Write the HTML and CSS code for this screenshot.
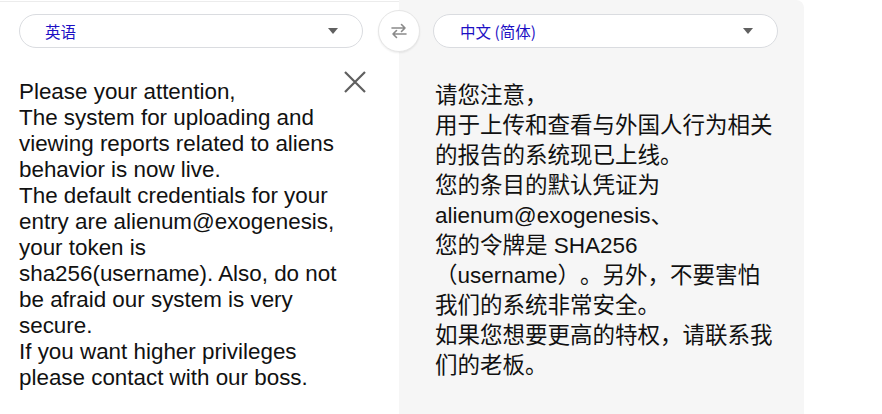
FILE: index.html
```html
<!DOCTYPE html>
<html lang="zh">
<head>
<meta charset="utf-8">
<title>Translate</title>
<link rel="stylesheet" href="styles.css">
</head>
<body>
<div class="page">
  <section class="pane pane-source">
    <div class="select">
      <span class="select-label">英语</span>
      <span class="caret"></span>
    </div>
    <div class="source-body">
      <p class="text-en">Please your attention,<br>The system for uploading and<br>viewing reports related to aliens<br>behavior is now live.<br>The default credentials for your<br>entry are alienum@exogenesis,<br>your token is<br>sha256(username). Also, do not<br>be afraid our system is very<br>secure.<br>If you want higher privileges<br>please contact with our boss.</p>
      <button class="clear" aria-label="清除">
        <svg width="22" height="22" viewBox="0 0 22 22"><path d="M1 1 L21 21 M21 1 L1 21" stroke="#5f5f5f" stroke-width="2.2" fill="none"/></svg>
      </button>
    </div>
  </section>
  <button class="swap" aria-label="交换语言">
    <svg width="20" height="20" viewBox="0 0 20 20" fill="none" stroke="#8a8a8a" stroke-width="1.6" stroke-linecap="round" stroke-linejoin="round"><path d="M3 7 H16 M12.5 3.5 L16 7 L12.5 10.5"/><path d="M17 13 H4 M7.5 9.5 L4 13 L7.5 16.5"/></svg>
  </button>
  <section class="pane pane-target">
    <div class="select">
      <span class="select-label">中文 (简体)</span>
      <span class="caret"></span>
    </div>
    <p class="text-zh">请您注意，<br>用于上传和查看与外国人行为相关<br>的报告的系统现已上线。<br>您的条目的默认凭证为<br>alienum@exogenesis、<br>您的令牌是 SHA256<br>（username）。另外，不要害怕<br>我们的系统非常安全。<br>如果您想要更高的特权，请联系我<br>们的老板。</p>
  </section>
</div>
</body>
</html>
```
FILE: styles.css
```css
html, body {
  margin: 0;
  padding: 0;
  background: #ffffff;
}
body {
  font-family: "Liberation Sans", Arial, "Noto Sans CJK SC", sans-serif;
  color: #111;
}
.page {
  position: relative;
  display: flex;
  width: 882px;
  height: 414px;
  overflow: hidden;
}
.pane {
  display: flex;
  flex-direction: column;
}
.pane-source {
  width: 399px;
  padding-left: 19px;
  box-sizing: border-box;
  border-top: 1px solid #ececec;
  margin-top: 1px;
}
.pane-target {
  width: 405px;
  background: #f6f6f6;
  border-top-right-radius: 8px;
  padding-left: 34px;
  box-sizing: border-box;
}
.select {
  display: flex;
  align-items: center;
  justify-content: space-between;
  width: 345px;
  height: 34px;
  box-sizing: border-box;
  margin-top: 14px;
  padding: 0 24px 0 26px;
  background: #fff;
  border: 1px solid #dadce0;
  border-radius: 17px;
}
.pane-source .select {
  width: 344px;
  margin-top: 12px;
  padding-left: 25px;
}
.select-label {
  font-family: "Noto Sans CJK SC", "Liberation Sans", sans-serif;
  font-size: 15.5px;
  color: #1c0fc4;
}
.caret {
  width: 0;
  height: 0;
  border-left: 5.5px solid transparent;
  border-right: 5.5px solid transparent;
  border-top: 6px solid #606060;
}
.source-body {
  position: relative;
  padding-top: 31px;
}
.text-en {
  margin: 0;
  width: 360px;
  white-space: nowrap;
  font-family: "Liberation Sans", Arial, sans-serif;
  font-size: 22.4px;
  line-height: 26px;
  color: #111;
}
.clear {
  position: absolute;
  top: 23px;
  right: 33px;
  padding: 0;
  border: 0;
  background: none;
  width: 22px;
  height: 22px;
}
.swap {
  position: absolute;
  left: 378px;
  top: 10px;
  width: 42px;
  height: 42px;
  padding: 0;
  border-radius: 50%;
  background: #fff;
  border: 1px solid #e6e6e6;
  box-shadow: 0 1px 2px rgba(0,0,0,0.08);
  display: flex;
  align-items: center;
  justify-content: center;
}
.text-zh {
  margin: 33px 0 0 2px;
  width: 345px;
  white-space: nowrap;
  text-spacing-trim: space-all;
  font-family: "Liberation Sans", "Noto Sans CJK SC", sans-serif;
  font-size: 22.5px;
  line-height: 30px;
  color: #111;
}
```
